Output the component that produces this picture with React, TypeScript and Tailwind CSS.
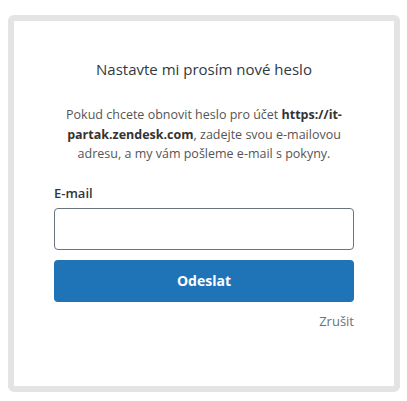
export default function App() {
  return (
    <div className="w-[407px] h-[401px] bg-white pt-[15px] px-[8px] font-['Open_Sans',sans-serif]">
      <div className="w-[392px] h-[377px] border-[6px] border-[#e4e4e4] rounded-[6px] bg-white px-[40px] pt-[38px]">
        <h2 className="text-[15px] leading-[20px] text-[#2f3941] text-center">Nastavte mi prosím nové heslo</h2>
        <p className="mt-[26px] text-[12.5px] leading-[19.5px] text-[#555] text-center">
          Pokud chcete obnovit heslo pro účet <strong className="font-bold text-[#333]">https://it-partak.zendesk.com</strong>, zadejte svou e-mailovou adresu, a my vám pošleme e-mail s pokyny.
        </p>
        <form className="mt-[20px]">
          <label htmlFor="email" className="block text-[13px] leading-[18px] font-semibold text-[#2f3941]">E-mail</label>
          <input
            id="email"
            type="email"
            className="mt-[6px] block w-full h-[42px] border border-[#68737d] rounded-[4px] px-3"
          />
          <button type="submit" className="mt-[10px] w-full h-[42px] rounded-[4px] bg-[#1f73b7] text-white text-[14px] font-bold">
            Odeslat
          </button>
          <div className="mt-[9px] text-right leading-[18px]">
            <span className="text-[13px] text-[#68737d]">Zrušit</span>
          </div>
        </form>
      </div>
    </div>
  )
}
